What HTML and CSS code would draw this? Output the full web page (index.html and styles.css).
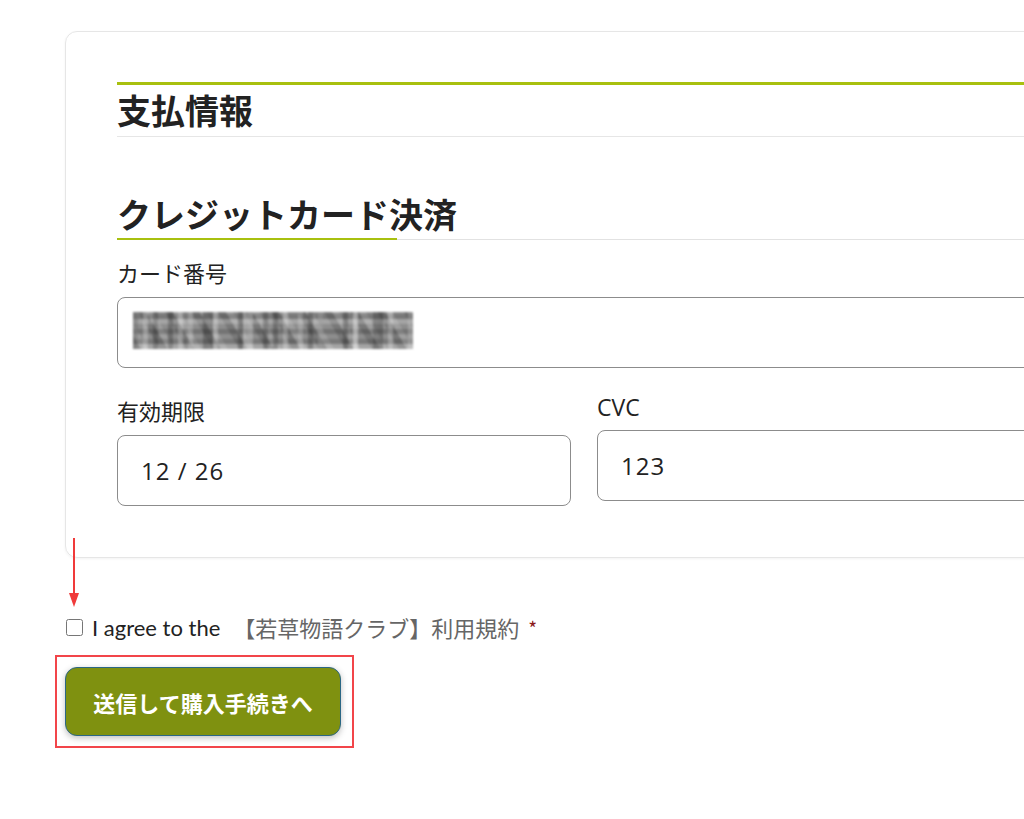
FILE: index.html
```html
<!DOCTYPE html>
<html lang="ja">
<head>
<meta charset="utf-8">
<link rel="stylesheet" href="styles.css">
</head>
<body>
<div class="page">
  <div class="card">
    <h2 class="sec-title">支払情報</h2>
    <h3 class="sub-title">クレジットカード決済</h3>
    <div class="field">
      <label class="label">カード番号</label>
      <div class="input"><span class="blur"></span></div>
    </div>
    <div class="row">
      <div class="field col-exp">
        <label class="label">有効期限</label>
        <div class="input">12 / 26</div>
      </div>
      <div class="field col-cvc">
        <label class="label label-latin">CVC</label>
        <div class="input">123</div>
      </div>
    </div>
  </div>
  <div class="agree">
    <span class="arrow"><svg width="12" height="70" viewBox="0 0 12 70"><line x1="6" y1="0" x2="6" y2="58" stroke="#f03a3a" stroke-width="2"/><polygon points="1,55 11,55 6,69" fill="#f03a3a"/></svg></span>
    <input type="checkbox" class="chk">
    <span class="agree-text">I agree to the</span>
    <a class="terms">【若草物語クラブ】利用規約</a>
    <span class="req">*</span>
  </div>
  <div class="btn-frame">
    <button class="btn">送信して購入手続きへ</button>
  </div>
</div>
</body>
</html>
```
FILE: styles.css
```css
html, body {
  margin: 0;
  padding: 0;
  background: #fff;
  overflow: hidden;
}
body {
  font-family: "Noto Sans CJK JP", "Noto Sans", sans-serif;
  color: #222;
}
.page {
  padding: 31px 0 0 65px;
  width: 1100px;
}
.card {
  border: 1px solid #e6e6e6;
  border-radius: 12px;
  box-shadow: 0 1px 3px rgba(0,0,0,0.05);
  padding: 50px 0 0 51px;
  width: 1000px;
  box-sizing: border-box;
  height: 527px;
}
.sec-title {
  margin: 0;
  border-top: 3px solid #a8c00f;
  border-bottom: 1px solid #e6e6e6;
  font-size: 34px;
  font-weight: 700;
  line-height: 49px;
  height: 51px;
  color: #222;
}
.sub-title {
  position: relative;
  margin: 56px 0 0;
  font-size: 34px;
  font-weight: 700;
  line-height: 42px;
  padding-bottom: 4px;
  border-bottom: 1px solid #e2e2e2;
  color: #222;
}
.sub-title::after {
  content: "";
  position: absolute;
  left: 0;
  bottom: -1px;
  width: 280px;
  height: 2px;
  background: #a8c00f;
}
.field {
  display: flex;
  flex-direction: column;
}
.label {
  font-size: 22px;
  line-height: 26px;
  margin-top: 19px;
  margin-bottom: 12px;
  color: #222;
}
.input {
  height: 71px;
  box-sizing: border-box;
  border: 1px solid #8c8c8c;
  border-radius: 8px;
  display: flex;
  align-items: center;
  padding-left: 23px;
  font-family: "Open Sans", sans-serif;
  font-size: 24px;
  letter-spacing: 1px;
  color: #222;
}
.input .blur {
  display: block;
  width: 280px;
  height: 37px;
  margin-left: -8px;
  margin-top: -4px;
  background-color: #8d8d8d;
  background-image:
    repeating-linear-gradient(90deg, rgba(0,0,0,0.22) 0 5px, transparent 5px 10px, rgba(255,255,255,0.25) 10px 15px, transparent 15px 35px),
    repeating-linear-gradient(90deg, rgba(255,255,255,0.2) 0 5px, transparent 5px 20px, rgba(0,0,0,0.2) 20px 25px, transparent 25px 55px),
    repeating-linear-gradient(0deg, rgba(255,255,255,0.2) 0 5px, rgba(0,0,0,0.15) 5px 10px, transparent 10px 25px),
    repeating-linear-gradient(0deg, transparent 0 15px, rgba(0,0,0,0.18) 15px 20px, transparent 20px 40px),
    repeating-linear-gradient(60deg, rgba(0,0,0,0.15) 0 7px, rgba(255,255,255,0.15) 7px 13px, transparent 13px 23px);
  filter: blur(0.8px);
}
.row {
  display: flex;
  gap: 26px;
}
.col-exp {
  width: 454px;
  flex: none;
}
.col-exp .label {
  margin-top: 29px;
  margin-bottom: 12px;
}
.col-cvc {
  flex: 1;
}
.col-cvc .label-latin {
  font-family: "Open Sans", sans-serif;
  font-size: 23px;
  margin-top: 26px;
  margin-bottom: 10px;
}
.agree {
  position: relative;
  display: flex;
  align-items: center;
  margin-top: 56px;
  height: 26px;
  font-size: 22px;
}
.arrow {
  position: absolute;
  left: 3px;
  top: -76px;
  line-height: 0;
}
.chk {
  margin: 0 9px 0 1px;
  width: 17px;
  height: 17px;
}
.agree-text {
  font-family: Lato, "Noto Sans", sans-serif;
  font-size: 22px;
  color: #222;
}
.terms {
  font-size: 22px;
  color: #666;
  margin-left: 13px;
}
.req {
  color: #8b1a1a;
  margin-left: 9px;
  font-size: 19px;
}
.btn-frame {
  display: inline-block;
  margin: 15px 0 0 -10px;
  border: 2px solid #f2454a;
  padding: 10px 11px 10px 8px;
  line-height: 0;
}
.btn {
  width: 276px;
  height: 69px;
  background: #7f9110;
  border: 1.5px solid #2b6785;
  border-radius: 12px;
  color: #fff;
  font-family: "Noto Sans CJK JP", sans-serif;
  font-size: 22px;
  font-weight: 700;
  box-shadow: 0 2px 6px rgba(0,0,0,0.25);
  cursor: pointer;
}
```
